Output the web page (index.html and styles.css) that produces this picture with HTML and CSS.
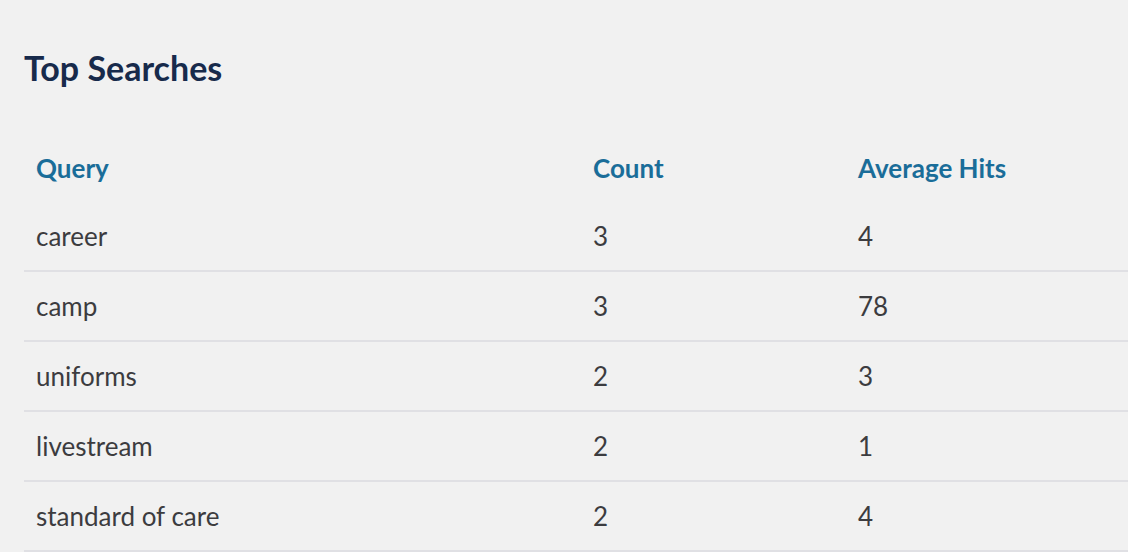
FILE: index.html
```html
<!DOCTYPE html>
<html lang="en">
<head>
<meta charset="utf-8">
<title>Top Searches</title>
<link rel="stylesheet" href="styles.css">
</head>
<body>
<section class="panel">
  <h2 class="title">Top Searches</h2>
  <table class="searches">
    <colgroup>
      <col class="col-query">
      <col class="col-count">
      <col class="col-hits">
    </colgroup>
    <thead>
      <tr><th>Query</th><th>Count</th><th>Average Hits</th></tr>
    </thead>
    <tbody>
      <tr><td>career</td><td>3</td><td>4</td></tr>
      <tr><td>camp</td><td>3</td><td>78</td></tr>
      <tr><td>uniforms</td><td>2</td><td>3</td></tr>
      <tr><td>livestream</td><td>2</td><td>1</td></tr>
      <tr><td>standard of care</td><td>2</td><td>4</td></tr>
    </tbody>
  </table>
</section>
</body>
</html>
```
FILE: styles.css
```css
html, body {
  margin: 0;
  padding: 0;
  background: #f1f1f1;
}
body {
  font-family: Lato, "Open Sans", sans-serif;
  overflow: hidden;
}
.panel {
  padding: 48px 0 0 24px;
}
.title {
  margin: 0;
  font-size: 34px;
  font-weight: 700;
  line-height: 40px;
  color: #172a4b;
}
.searches {
  margin-top: 46px;
  width: 100%;
  border-collapse: collapse;
  table-layout: fixed;
}
.col-query { width: 557px; }
.col-count { width: 265px; }
.col-hits { width: auto; }
.searches th {
  text-align: left;
  font-size: 26px;
  font-weight: 700;
  color: #1a6d99;
  height: 68px;
  padding: 0 12px;
  vertical-align: middle;
}
.searches td {
  font-size: 26px;
  color: #3c3c3f;
  height: 68px;
  padding: 0 12px;
  vertical-align: middle;
  border-bottom: 2px solid #e0e0e4;
}
```
